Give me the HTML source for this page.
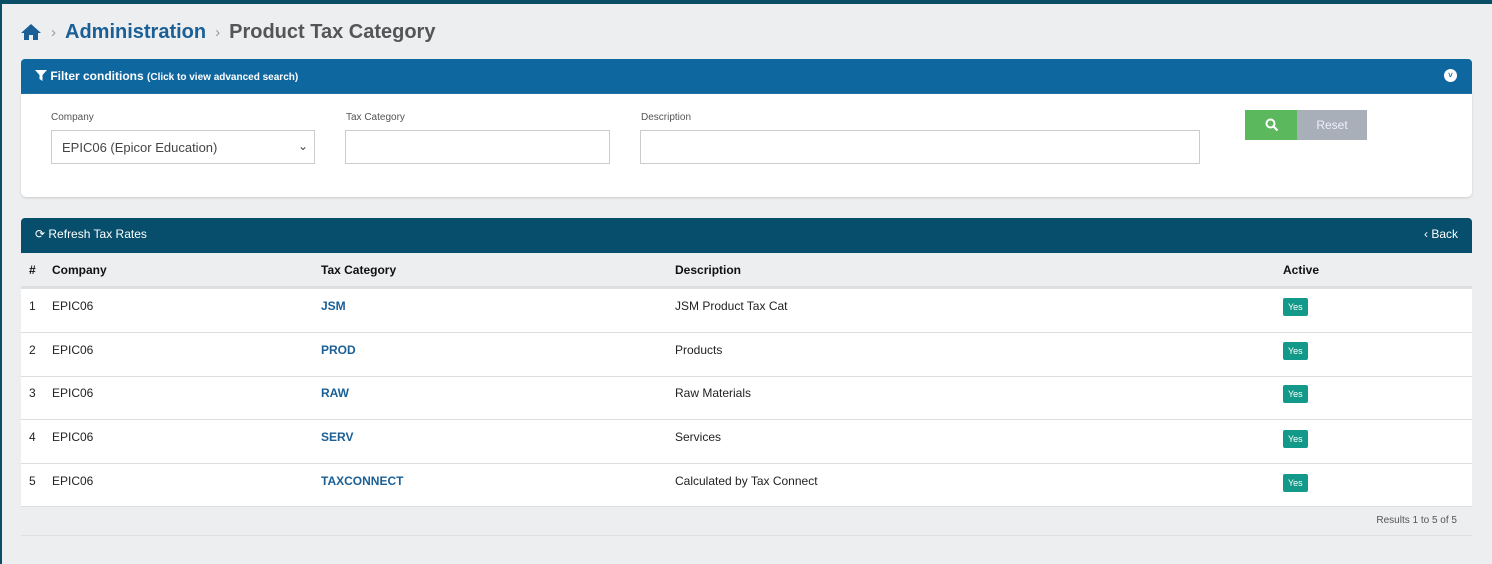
<!DOCTYPE html>
<html><head><style>
*{box-sizing:border-box;margin:0;padding:0}
body{width:1492px;height:564px;background:#eceef0;font-family:"Liberation Sans",sans-serif;position:relative;overflow:hidden}
.abs{position:absolute}
.bc{left:20px;top:18px;height:28px;display:flex;align-items:center;font-weight:bold;font-size:20px}
.sep{color:#999;font-size:15px;margin:0 9px;font-weight:normal}
.fh{left:21px;top:59px;width:1451px;height:35px;background:#0f67a0;border-radius:4px 4px 0 0;color:#fff;font-size:12px;font-weight:bold;padding:10px 14px}
.fb{left:21px;top:94px;width:1451px;height:103px;background:#fff;border-radius:0 0 5px 5px;box-shadow:0 1px 2px #ccc}
.lbl{font-size:10px;color:#555}
.inp{border:1px solid #ccc;height:34px;background:#fff;font-size:13px;color:#444;padding:9px 10px}
.th{left:21px;top:218px;width:1451px;height:35px;background:#064e6b;border-radius:4px 4px 0 0;color:#fff;font-size:12px}
.row{position:absolute;left:21px;width:1451px;background:#fff;border-bottom:1px solid #ddd;font-size:12px;color:#222}
.row span,.hdr span{position:absolute}
.hdr{position:absolute;left:21px;top:253px;width:1451px;height:36px;font-size:12px;font-weight:bold;color:#111;border-bottom:3px solid #dde0e3}
.lnk{color:#1a5f95;font-weight:bold}
.yes{background:#12998a;color:#fff;font-size:9px;border-radius:2px;padding:4px 5px}
</style></head><body>
<div class="abs" style="left:0;top:0;width:1492px;height:4px;background:#0a4d66"></div>
<div class="abs" style="left:0;top:0;width:2px;height:564px;background:#0a4d66"></div>
<div class="abs bc">
<svg width="22" height="18" viewBox="0 0 22 18"><path d="M11 1 L1 10 H4 V17 H9 V12 H13 V17 H18 V10 H21 Z" fill="#1a5f95"/></svg>
<span class="sep">›</span><span style="color:#1a5f95">Administration</span><span class="sep">›</span><span style="color:#555">Product Tax Category</span></div>
<div class="abs fh"><svg width="12" height="11" viewBox="0 0 12 11" style="vertical-align:-1px"><path d="M0 0H12L7.5 5V11L4.5 9V5Z" fill="#fff"/></svg> Filter conditions <span style="font-size:10px">(Click to view advanced search)</span>
<span class="abs" style="right:15px;top:10px;width:13px;height:13px;border-radius:50%;background:#fff;color:#0f67a0;font-size:8px;text-align:center;line-height:13px">˅</span></div>
<div class="abs fb"></div>
<div class="abs lbl" style="left:51px;top:112px">Company</div>
<div class="abs inp" style="left:51px;top:130px;width:264px">EPIC06 (Epicor Education)<span style="position:absolute;right:6px;top:8px;font-size:12px">⌄</span></div>
<div class="abs lbl" style="left:346px;top:112px">Tax Category</div>
<div class="abs inp" style="left:345px;top:130px;width:265px"></div>
<div class="abs lbl" style="left:641px;top:112px">Description</div>
<div class="abs inp" style="left:640px;top:130px;width:560px"></div>
<div class="abs" style="left:1245px;top:110px;width:52px;height:30px;background:#5cb85c"><svg class="abs" style="left:20px;top:8px" width="14" height="14" viewBox="0 0 14 14"><circle cx="5.5" cy="5.5" r="4" stroke="#fff" stroke-width="2" fill="none"/><path d="M8.5 8.5L12.5 12.5" stroke="#fff" stroke-width="2.2"/></svg></div>
<div class="abs" style="left:1297px;top:110px;width:70px;height:30px;background:#a9afb9;color:#eef;font-size:12px;text-align:center;line-height:30px">Reset</div>
<div class="abs th"><span class="abs" style="left:14px;top:9px">⟳ Refresh Tax Rates</span><span class="abs" style="right:14px;top:9px">‹ Back</span></div>
<div class="hdr"><span style="left:8px;top:10px">#</span><span style="left:31px;top:10px">Company</span><span style="left:300px;top:10px">Tax Category</span><span style="left:654px;top:10px">Description</span><span style="left:1262px;top:10px">Active</span></div>
<div class="row" style="top:289px;height:44px"><span style="left:8px;top:10px">1</span><span style="left:31px;top:10px">EPIC06</span><span class="lnk" style="left:300px;top:10px">JSM</span><span style="left:654px;top:10px">JSM Product Tax Cat</span><span class="yes" style="left:1262px;top:9px">Yes</span></div>
<div class="row" style="top:333px;height:44px"><span style="left:8px;top:10px">2</span><span style="left:31px;top:10px">EPIC06</span><span class="lnk" style="left:300px;top:10px">PROD</span><span style="left:654px;top:10px">Products</span><span class="yes" style="left:1262px;top:9px">Yes</span></div>
<div class="row" style="top:377px;height:43px"><span style="left:8px;top:9px">3</span><span style="left:31px;top:9px">EPIC06</span><span class="lnk" style="left:300px;top:9px">RAW</span><span style="left:654px;top:9px">Raw Materials</span><span class="yes" style="left:1262px;top:8px">Yes</span></div>
<div class="row" style="top:420px;height:44px"><span style="left:8px;top:10px">4</span><span style="left:31px;top:10px">EPIC06</span><span class="lnk" style="left:300px;top:10px">SERV</span><span style="left:654px;top:10px">Services</span><span class="yes" style="left:1262px;top:10px">Yes</span></div>
<div class="row" style="top:464px;height:43px"><span style="left:8px;top:10px">5</span><span style="left:31px;top:10px">EPIC06</span><span class="lnk" style="left:300px;top:10px">TAXCONNECT</span><span style="left:654px;top:10px">Calculated by Tax Connect</span><span class="yes" style="left:1262px;top:10px">Yes</span></div>
<div class="abs" style="left:21px;top:507px;width:1451px;height:29px;border-bottom:1px solid #dcdfe2;font-size:10px;color:#555;text-align:right;padding:8px 15px 0 0">Results 1 to 5 of 5</div>
</body></html>
